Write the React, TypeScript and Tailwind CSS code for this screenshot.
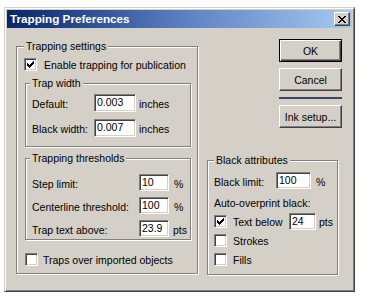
import type { ReactNode } from 'react';

// classic win9x bevels
const RAISED =
  'border border-t-white border-l-white border-r-[#404040] border-b-[#404040] shadow-[inset_-1px_-1px_0_#808080]';
const SUNKEN =
  'border border-t-[#808080] border-l-[#808080] border-r-white border-b-white shadow-[inset_1px_1px_0_#404040,inset_-1px_-1px_0_#d4d0c8] bg-white';

function GroupBox({
  label,
  labelLeft,
  className,
  children,
}: {
  label: string;
  labelLeft: string;
  className: string;
  children: ReactNode;
}) {
  return (
    <div className={`relative border border-[#808080] shadow-[inset_1px_1px_0_#fff,1px_1px_0_#fff] ${className}`}>
      <span className={`absolute -top-[7px] ${labelLeft} bg-[#d4d0c8] px-[2px] leading-[12px] whitespace-nowrap`}>
        {label}
      </span>
      {children}
    </div>
  );
}

function Check({ checked = false }: { checked?: boolean }) {
  return (
    <span className={`flex h-[13px] w-[13px] shrink-0 items-center justify-center ${SUNKEN}`}>
      {checked && (
        <svg width="7" height="7" viewBox="0 0 7 7" shapeRendering="crispEdges">
          <rect x="6" y="0" width="1" height="1" fill="#000" />
          <rect x="5" y="1" width="2" height="1" fill="#000" />
          <rect x="0" y="2" width="1" height="1" fill="#000" />
          <rect x="4" y="2" width="3" height="1" fill="#000" />
          <rect x="0" y="3" width="2" height="1" fill="#000" />
          <rect x="3" y="3" width="3" height="1" fill="#000" />
          <rect x="0" y="4" width="5" height="1" fill="#000" />
          <rect x="1" y="5" width="3" height="1" fill="#000" />
          <rect x="2" y="6" width="1" height="1" fill="#000" />
        </svg>
      )}
    </span>
  );
}

function Field({ value, className }: { value: string; className: string }) {
  return <div className={`${SUNKEN} ${className} shrink-0 pl-[2px] pt-[1px] leading-[12px]`}>{value}</div>;
}

function Button({ children, isDefault = false }: { children: ReactNode; isDefault?: boolean }) {
  return (
    <button
      type="button"
      className={[
        'flex h-[23px] w-[63px] items-center justify-center self-end bg-[#d4d0c8] leading-[12px]',
        isDefault
          ? 'border border-black shadow-[inset_1px_1px_0_#fff,inset_-1px_-1px_0_#404040,inset_-2px_-2px_0_#808080]'
          : RAISED,
      ].join(' ')}>
      {children}
    </button>
  );
}

function CloseGlyph() {
  return (
    <svg width="8" height="7" viewBox="0 0 8 7" shapeRendering="crispEdges">
      <rect x="0" y="0" width="2" height="1" fill="#000" />
      <rect x="6" y="0" width="2" height="1" fill="#000" />
      <rect x="1" y="1" width="2" height="1" fill="#000" />
      <rect x="5" y="1" width="2" height="1" fill="#000" />
      <rect x="2" y="2" width="4" height="1" fill="#000" />
      <rect x="3" y="3" width="2" height="1" fill="#000" />
      <rect x="2" y="4" width="4" height="1" fill="#000" />
      <rect x="1" y="5" width="2" height="1" fill="#000" />
      <rect x="5" y="5" width="2" height="1" fill="#000" />
      <rect x="0" y="6" width="2" height="1" fill="#000" />
      <rect x="6" y="6" width="2" height="1" fill="#000" />
    </svg>
  );
}

export default function App() {
  return (
    <div className="h-[302px] w-[370px] bg-white pl-[4px] pt-[7px] font-['Liberation_Sans',Arial,sans-serif] text-[10.5px] leading-[12px] text-black">
      <div className="flex h-[285px] w-[351px] flex-col border border-t-[#d4d0c8] border-l-[#d4d0c8] border-r-[#404040] border-b-[#404040] bg-[#d4d0c8] p-[2px] shadow-[inset_1px_1px_0_#fff,inset_-1px_-1px_0_#808080]">
        {/* title bar */}
        <div className="flex h-[18px] shrink-0 items-center justify-between bg-linear-to-r from-[#0a246a] via-[#5a7fc0] to-[#a6caf0] pl-[3px] pr-[2px]">
          <span className="text-[11.7px] font-bold leading-[14px] text-white">Trapping Preferences</span>
          <span className={`flex h-[14px] w-[16px] items-center justify-center bg-[#d4d0c8] ${RAISED}`}>
            <CloseGlyph />
          </span>
        </div>

        <div className="flex pl-[9px]">
          {/* Trapping settings */}
          <GroupBox
            label="Trapping settings"
            labelLeft="left-[7px]"
            className="mt-[18px] flex h-[228px] w-[182px] shrink-0 flex-col pl-[7px]">
            <div className="mt-[11px] flex h-[13px] items-center">
              <Check checked />
              <span className="ml-[7px] whitespace-nowrap">Enable trapping for publication</span>
            </div>

            <GroupBox label="Trap width" labelLeft="left-[4px]" className="ml-[1px] mt-[12px] h-[64px] w-[166px] pl-[6px] pt-[10px]">
              <div className="flex h-[18px] items-start">
                <span className="w-[62px] pt-[4px]">Default:</span>
                <Field value="0.003" className="h-[18px] w-[42px]" />
                <span className="ml-[3px] pt-[4px]">inches</span>
              </div>
              <div className="mt-[7px] flex h-[18px] items-start">
                <span className="w-[62px] pt-[4px]">Black width:</span>
                <Field value="0.007" className="h-[18px] w-[42px]" />
                <span className="ml-[3px] pt-[4px]">inches</span>
              </div>
            </GroupBox>

            <GroupBox
              label="Trapping thresholds"
              labelLeft="left-[4px]"
              className="ml-[1px] mt-[11px] flex h-[82px] w-[166px] flex-col gap-[6px] pl-[6px] pt-[15px]">
              <div className="flex h-[17px] items-start">
                <span className="w-[107px] pt-[4px]">Step limit:</span>
                <Field value="10" className="h-[17px] w-[30px]" />
                <span className="ml-[5px] pt-[4px]">%</span>
              </div>
              <div className="flex h-[17px] items-start">
                <span className="w-[107px] pt-[4px]">Centerline threshold:</span>
                <Field value="100" className="h-[17px] w-[30px]" />
                <span className="ml-[5px] pt-[4px]">%</span>
              </div>
              <div className="flex h-[17px] items-start">
                <span className="w-[107px] pt-[4px]">Trap text above:</span>
                <Field value="23.9" className="h-[17px] w-[30px]" />
                <span className="ml-[4px] pt-[4px]">pts</span>
              </div>
            </GroupBox>

            <div className="ml-[1px] mt-[13px] flex h-[13px] items-center">
              <Check />
              <span className="ml-[5px] whitespace-nowrap">Traps over imported objects</span>
            </div>
          </GroupBox>

          {/* buttons + black attributes */}
          <div className="ml-[9px] flex w-[135px] shrink-0 flex-col">
            <div className="mt-[11px] flex flex-col gap-[6px]">
              <Button isDefault>OK</Button>
              <Button>Cancel</Button>
              <div className="h-[2px] w-[63px] self-end bg-[#3a4560]" />
              <Button>Ink setup...</Button>
            </div>

            <GroupBox label="Black attributes" labelLeft="left-[6px]" className="mt-[32px] h-[115px] w-[131px] pl-[6px] pt-[11px]">
              <div className="flex h-[17px] items-start">
                <span className="w-[62px] pt-[4px]">Black limit:</span>
                <Field value="100" className="h-[17px] w-[35px]" />
                <span className="ml-[5px] pt-[4px]">%</span>
              </div>
              <div className="mt-[8px] whitespace-nowrap">Auto-overprint black:</div>
              <div className="mt-[4px] flex h-[17px] items-center">
                <Check checked />
                <span className="ml-[6px] w-[56px] whitespace-nowrap">Text below</span>
                <Field value="24" className="h-[17px] w-[27px]" />
                <span className="ml-[3px]">pts</span>
              </div>
              <div className="mt-[4px] flex h-[13px] items-center">
                <Check />
                <span className="ml-[6px]">Strokes</span>
              </div>
              <div className="mt-[6px] flex h-[13px] items-center">
                <Check />
                <span className="ml-[6px]">Fills</span>
              </div>
            </GroupBox>
          </div>
        </div>
      </div>
    </div>
  );
}
